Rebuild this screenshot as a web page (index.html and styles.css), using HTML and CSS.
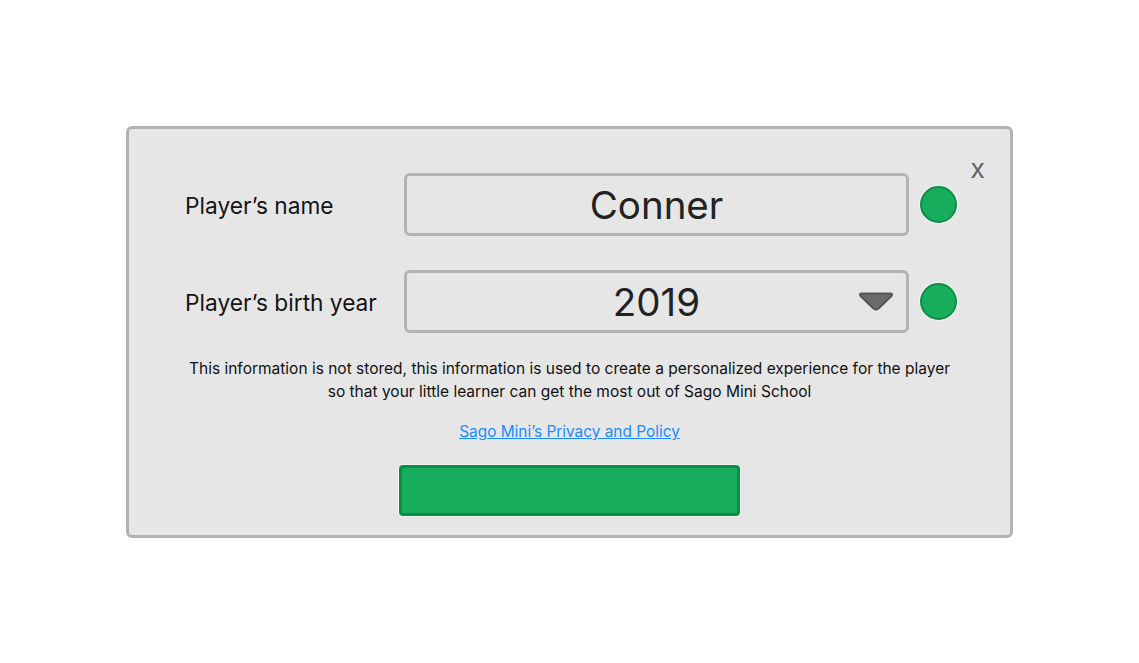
FILE: index.html
```html
<!DOCTYPE html>
<html lang="en">
<head>
    <meta charset="UTF-8">
    <meta name="viewport" content="width=device-width, initial-scale=1.0">
    <title>Player profile</title>
    <link rel="stylesheet" href="styles.css">
</head>
<body>
    <div class="dialog">
        <span class="close">x</span>

        <div class="field-row">
            <label class="field-label">Player’s name</label>
            <div class="field-box">Conner</div>
            <span class="status-dot"></span>
        </div>

        <div class="field-row">
            <label class="field-label">Player’s birth year</label>
            <div class="field-box select-box">
                2019
                <svg class="caret" width="38" height="21" viewBox="0 0 38 21">
                    <path d="M5 2.5 H33 Q36.5 2.5 34 5.5 L21.5 17.5 Q19 19.5 16.5 17.5 L4 5.5 Q1.5 2.5 5 2.5 Z" fill="#6b6b6b" stroke="#555" stroke-width="2" stroke-linejoin="round"/>
                </svg>
            </div>
            <span class="status-dot"></span>
        </div>

        <p class="notice">This information is not stored, this information is used to create a personalized experience for the player<br>so that your little learner can get the most out of Sago Mini School</p>

        <a class="policy-link" href="#">Sago Mini’s Privacy and Policy</a>

        <button class="continue-btn"></button>
    </div>
</body>
</html>
```

FILE: styles.css
```css
:root {
    --panel-bg: #e6e6e6;
    --panel-border: #b3b3b3;
    --green: #16ae5c;
    --green-dark: #0f8d48;
    --text: #141414;
}

body {
    margin: 0;
    padding: 126px 0 0 126px;
    background: #fff;
    font-family: Inter, "Noto Sans", sans-serif;
    color: var(--text);
}

.dialog {
    position: relative;
    box-sizing: border-box;
    width: 887px;
    height: 412px;
    padding: 44px 0 0 56px;
    background: var(--panel-bg);
    border: 3px solid var(--panel-border);
    border-radius: 6px;
    display: flex;
    flex-direction: column;
}

.close {
    position: absolute;
    top: 26px;
    right: 25px;
    font-size: 27px;
    line-height: 27px;
    color: #666;
}

.field-row {
    display: flex;
    align-items: center;
    margin-bottom: 34px;
}

.field-row:last-of-type {
    margin-bottom: 0;
}

.field-label {
    width: 219px;
    font-size: 22.7px;
    padding-top: 2px;
}

.field-box {
    position: relative;
    box-sizing: border-box;
    width: 505px;
    height: 63px;
    border: 3px solid var(--panel-border);
    border-radius: 6px;
    display: flex;
    align-items: center;
    justify-content: center;
    font-size: 38.5px;
    color: #222;
}

.caret {
    position: absolute;
    right: 11px;
    top: 18px;
}

.status-dot {
    box-sizing: border-box;
    width: 37px;
    height: 37px;
    margin: 0 0 0 11px;
    border-radius: 50%;
    background: var(--green);
    border: 2px solid var(--green-dark);
    box-shadow: 0 0 0 1px #f4f4f4;
}

.notice {
    margin: 24px 0 0 -56px;
    text-align: center;
    font-size: 15.5px;
    line-height: 23px;
    color: #111;
}

.policy-link {
    align-self: center;
    margin: 17px 0 0 -56px;
    font-size: 15.4px;
    line-height: 23px;
    color: #1a8cff;
    text-decoration: underline;
}

.continue-btn {
    align-self: center;
    box-sizing: border-box;
    width: 341px;
    height: 51px;
    margin: 22px 0 0 -56px;
    background: var(--green);
    border: 3px solid var(--green-dark);
    border-radius: 4px;
    box-shadow: 0 0 0 1px #f4f4f4;
}
```
